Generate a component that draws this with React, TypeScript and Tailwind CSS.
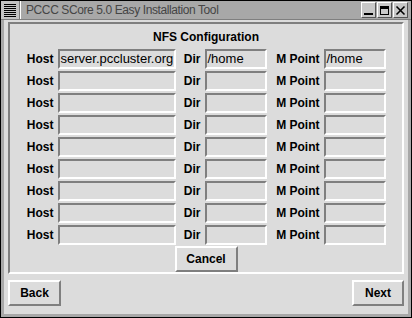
import React from "react";

const rows = [
  { host: "server.pccluster.org", dir: "/home", mpoint: "/home" },
  { host: "", dir: "", mpoint: "" },
  { host: "", dir: "", mpoint: "" },
  { host: "", dir: "", mpoint: "" },
  { host: "", dir: "", mpoint: "" },
  { host: "", dir: "", mpoint: "" },
  { host: "", dir: "", mpoint: "" },
  { host: "", dir: "", mpoint: "" },
  { host: "", dir: "", mpoint: "" },
];

const Field = ({ value, width }: { value: string; width: string }) => (
  <div
    className={`${width} h-[20px] border-2 border-t-[#7f7f7f] border-l-[#7f7f7f] border-b-white border-r-white bg-[#dcdcdc] text-[13px] font-normal leading-[16px] text-black px-[1px] overflow-hidden whitespace-nowrap`}
  >
    {value}
  </div>
);

const Button = ({ label, className }: { label: string; className: string }) => (
  <div
    className={`${className} flex items-center justify-center border-2 border-t-white border-l-white border-b-[#7f7f7f] border-r-[#7f7f7f] bg-[#dcdcdc] text-[12px] font-bold text-black`}
  >
    {label}
  </div>
);

export default function App() {
  return (
    <div
      className="w-[412px] h-[318px] bg-[#dcdcdc] border border-black flex flex-col overflow-hidden"
      style={{ fontFamily: '"Liberation Sans", Arial, sans-serif' }}
    >
      {/* title bar */}
      <div className="h-[19px] flex items-stretch bg-[#a8a8a8] border-b border-[#7f7f7f]">
        <div className="w-[19px] flex flex-col justify-center gap-[1px] px-[3px] border-r border-[#7f7f7f] bg-[#c4c4c4]">
          {[0, 1, 2, 3, 4, 5, 6].map((i) => (
            <div key={i} className="h-[1px] bg-black" />
          ))}
        </div>
        <div className="flex-1 pl-[5px] text-[12px] tracking-[-0.4px] leading-[19px] text-[#454545] border-l border-white">
          PCCC SCore 5.0 Easy Installation Tool
        </div>
        <div className="flex items-center gap-[1px] pr-[3px]">
          {["min", "max", "close"].map((k) => (
            <div
              key={k}
              className="w-[15px] h-[16px] border border-t-white border-l-white border-b-[#555] border-r-[#555] bg-[#c8c8c8] flex items-center justify-center"
            >
              <svg width="11" height="11" viewBox="0 0 11 11">
                {k === "min" && <rect x="1" y="8" width="9" height="2" fill="#000" />}
                {k === "max" && (
                  <g fill="none" stroke="#000">
                    <rect x="1.5" y="1.5" width="8" height="8" />
                    <line x1="1" y1="3" x2="10" y2="3" strokeWidth="2" />
                  </g>
                )}
                {k === "close" && (
                  <g stroke="#000" strokeWidth="1.6">
                    <line x1="1.5" y1="1.5" x2="9.5" y2="9.5" />
                    <line x1="9.5" y1="1.5" x2="1.5" y2="9.5" />
                  </g>
                )}
              </svg>
            </div>
          ))}
        </div>
      </div>

      {/* body */}
      <div className="flex-1 flex flex-col border-l-[3px] border-r-[3px] border-b-[3px] border-[#a8a8a8] px-[4px] pt-[2px]">
        <div className="h-[252px] border-2 border-t-[#7f7f7f] border-l-[#7f7f7f] border-b-white border-r-white flex flex-col items-center">
          <div className="mt-[6px] text-[12px] font-bold leading-[14px] text-black">NFS Configuration</div>
          <div className="mt-[5px] flex flex-col gap-[2px]">
            {rows.map((r, i) => (
              <div key={i} className="flex items-center text-[12px] font-bold text-black">
                <span className="w-[31px] text-right pr-[4px]">Host</span>
                <Field value={r.host} width="w-[118px]" />
                <span className="w-[29px] text-right pr-[4px]">Dir</span>
                <Field value={r.dir} width="w-[62px]" />
                <span className="w-[57px] text-right pr-[4px]">M Point</span>
                <Field value={r.mpoint} width="w-[62px]" />
              </div>
            ))}
          </div>
          <Button label="Cancel" className="mt-[1px] w-[63px] h-[26px]" />
        </div>
        <div className="mt-[6px] flex justify-between">
          <Button label="Back" className="w-[53px] h-[26px]" />
          <Button label="Next" className="w-[52px] h-[26px]" />
        </div>
      </div>
    </div>
  );
}
